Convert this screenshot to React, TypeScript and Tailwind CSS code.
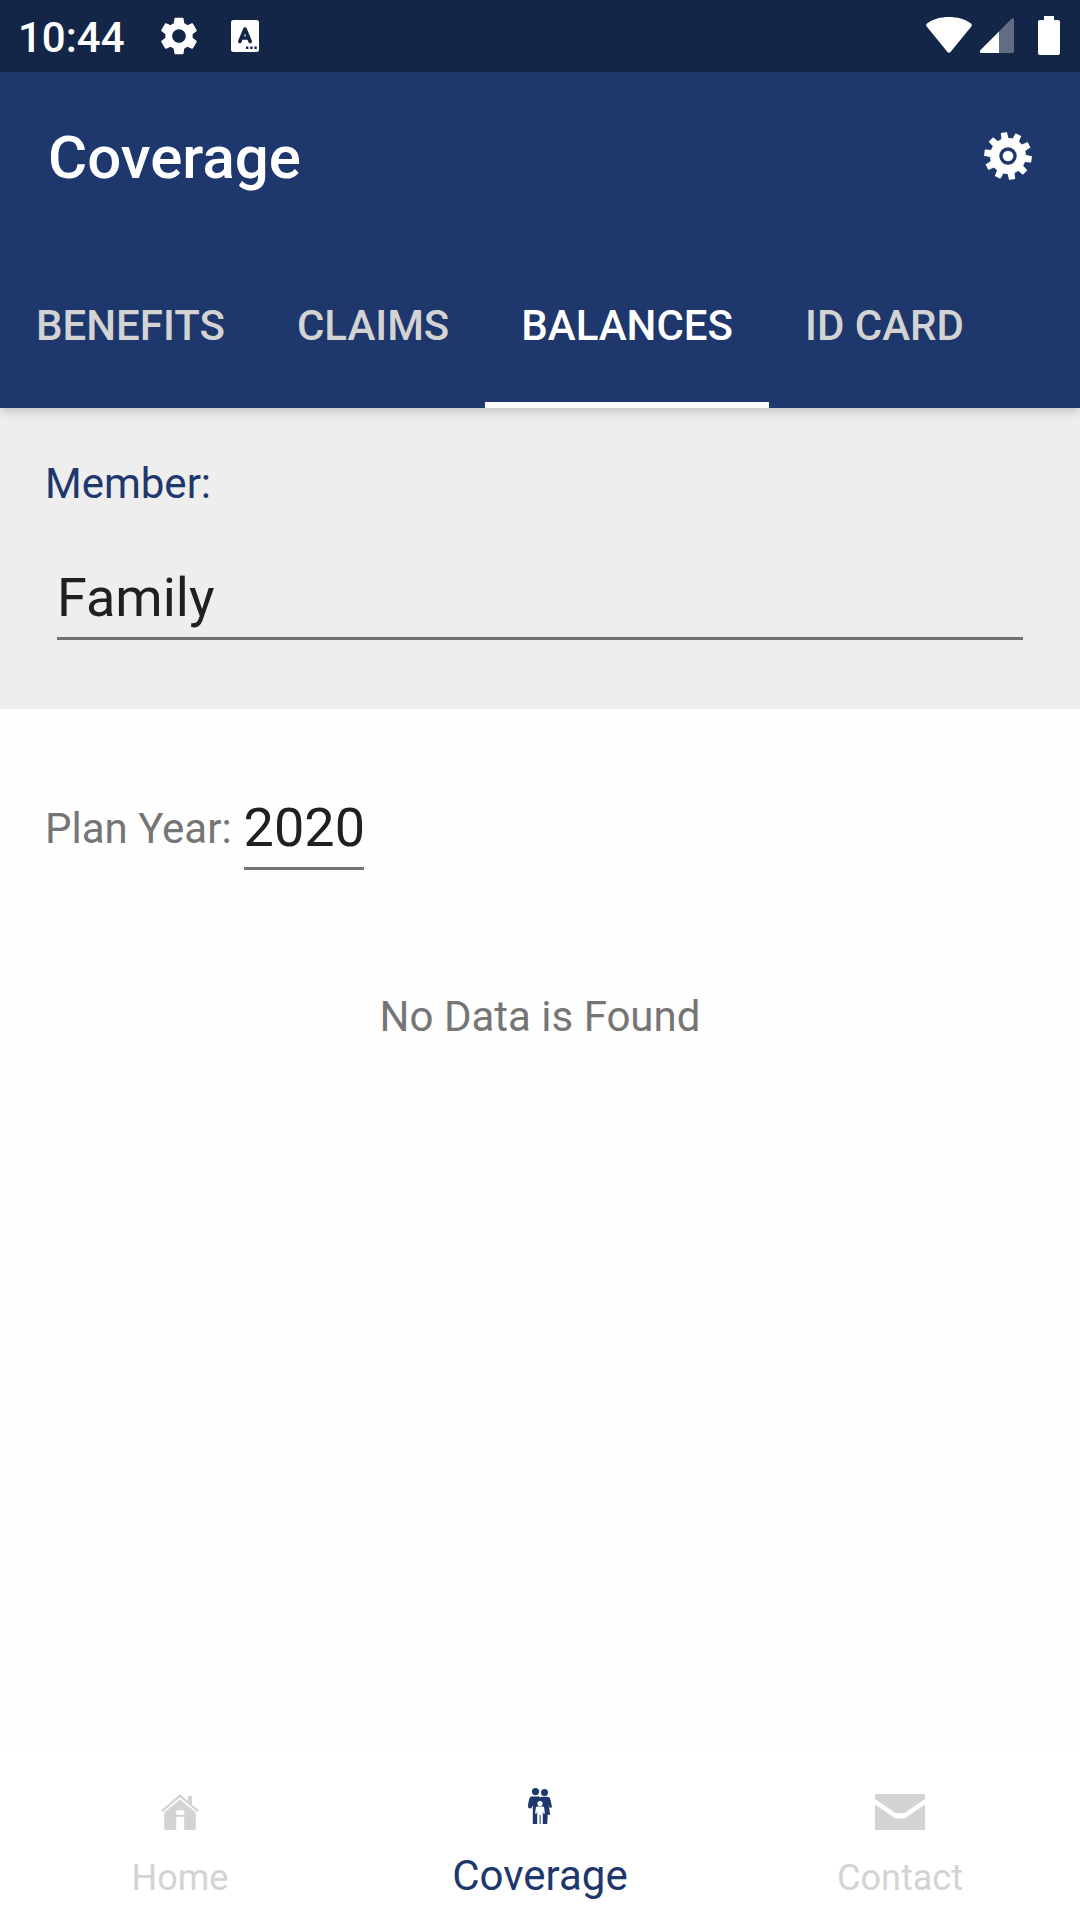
import { useState } from 'react'
import type { ReactNode } from 'react'

const tabs = ['Benefits', 'Claims', 'Balances', 'ID Card']

function StatusBar() {
  return (
    <div className="relative z-10 flex h-[72px] items-center bg-[#142648] pl-[18px] pr-5 text-white">
      <span className="pt-[3px] text-[42px] leading-[50px] font-medium">10:44</span>
      <svg className="ml-[35px] size-[38px]" viewBox="2 2 20 20" fill="currentColor" aria-hidden="true">
        <path d="M19.14 12.94c.04-.3.06-.61.06-.94 0-.32-.02-.64-.07-.94l2.03-1.58c.18-.14.23-.41.12-.61l-1.92-3.32c-.12-.22-.37-.29-.59-.22l-2.39.96c-.5-.38-1.03-.7-1.62-.94l-.36-2.54c-.04-.24-.24-.41-.48-.41h-3.84c-.24 0-.43.17-.47.41l-.36 2.54c-.59.24-1.13.57-1.62.94l-2.39-.96c-.22-.08-.47 0-.59.22L2.74 8.87c-.12.21-.08.47.12.61l2.03 1.58c-.05.3-.09.63-.09.94s.02.64.07.94l-2.03 1.58c-.18.14-.23.41-.12.61l1.92 3.32c.12.22.37.29.59.22l2.39-.96c.5.38 1.03.7 1.62.94l.36 2.54c.05.24.24.41.48.41h3.84c.24 0 .44-.17.47-.41l.36-2.54c.59-.24 1.13-.56 1.62-.94l2.39.96c.22.08.47 0 .59-.22l1.92-3.32c.12-.22.07-.47-.12-.61l-2.01-1.58zM12 15.6c-1.98 0-3.6-1.62-3.6-3.6s1.62-3.6 3.6-3.6 3.6 1.62 3.6 3.6-1.62 3.6-3.6 3.6z" />
      </svg>
      <svg className="ml-[33px] h-8 w-7" viewBox="0 0 28 32" aria-hidden="true">
        <rect width="28" height="32" rx="2.5" fill="#fff" />
        <path d="M8.800 21.500L14 9l5.200 12.500M11 18h6" fill="none" stroke="#142648" strokeWidth="3.600" strokeLinecap="round" strokeLinejoin="round" />
        <path d="M15 26.500h2.400v2.400H15zM19.200 26.500h2.400v2.400h-2.400zM23.400 26.500h2.400v2.400h-2.400z" fill="#142648" />
      </svg>
      <div className="ml-auto flex items-center pb-0.5">
        <svg className="h-9 w-[46px]" viewBox="0 0 46 36" fill="currentColor" aria-hidden="true">
          <path d="M1 6.500C7 2 15 0 23 0s16 2 22 6.500c1 .8 1 2 .3 2.900L24.500 35c-.8 1-2.200 1-3 0L.7 9.400C0 8.500 0 7.300 1 6.500z" />
        </svg>
        <svg className="ml-2 h-[35px] w-[34px]" viewBox="0 0 34 35" fill="currentColor" aria-hidden="true">
          <path d="M19 13.500L31.200 1c1.100-1.200 2.800-.8 2.800 1v31c0 1.200-.8 2-2 2H19z" opacity=".33" />
          <path d="M19 13.500V35H1.500C0 35-.5 33.200.5 32z" />
        </svg>
        <svg className="ml-6 h-[39px] w-[22px]" viewBox="0 0 22 39" fill="currentColor" aria-hidden="true">
          <path d="M6 0h10v4h4c1.300 0 2 .7 2 2v31c0 1.300-.7 2-2 2H2c-1.300 0-2-.7-2-2V6c0-1.300.7-2 2-2h4z" />
        </svg>
      </div>
    </div>
  )
}

const teeth = [0, 36, 72, 108, 144, 180, 216, 252, 288, 324]

function CogIcon() {
  return (
    <svg className="size-12" viewBox="-24 -24 48 48" aria-hidden="true">
      <circle r="18" fill="#fff" />
      {teeth.map(angle => (
        <path key={angle} d="M-3.600-17L-3.100-23.800H3.100L3.600-17z" fill="#fff" transform={`rotate(${angle - 10})`} />
      ))}
      <circle r="7" fill="none" stroke="#1e376c" strokeWidth="3.400" />
    </svg>
  )
}

function HomeIcon() {
  return (
    <svg className="h-9 w-[38px]" viewBox="0 0 38 36" fill="currentColor" aria-hidden="true">
      <path d="M0 16.500L19 0l8 7V2h4v8.500l7 6-1.300 1.700L19 3.300 1.300 18.200z" />
      <path d="M3.200 18.500L19 5.500l15.800 13V36H23.200V16.200h-8V36h-12z" />
      <path d="M15 20.800h8.500v2H15z" />
    </svg>
  )
}

function FamilyIcon() {
  return (
    <svg className="h-9 w-6" viewBox="0 0 24 36" fill="currentColor" aria-hidden="true">
      <circle cx="7.500" cy="3.600" r="3.600" />
      <circle cx="16.500" cy="4.400" r="3.500" />
      <path d="M3.500 8.500h7.500l1.200 1 1.300-.8h6c2 0 2.600 1.500 3 3l1.500 7.500-2.200.9-1.300-3.300 1.800 10H19.700l-.5 9.200H4.800V17.500l-1.600 3L.3 20 0 17l1.200-6c.4-1.600 1-2.300 2.300-2.500z" />
      <circle cx="12" cy="15.600" r="2.600" fill="#fff" />
      <path d="M9.500 18.500h5c1 0 1.500.6 1.700 1.600l.7 5.400-1.400.3-.7-3V36h-2.200v-9h-1v9H9.200V22.800l-.6 3-1.500-.3.700-5.400c.2-1 .7-1.600 1.700-1.600z" fill="#fff" />
    </svg>
  )
}

function MailIcon() {
  return (
    <svg className="h-9 w-[50px]" viewBox="0 0 50 36" fill="currentColor" aria-hidden="true">
      <path d="M0 0h50v5L29.500 19h-9L0 5z" />
      <path d="M0 10.500L20.500 24.500h9L50 10.500V36H0z" />
    </svg>
  )
}

type NavItemProps = { label: string; icon: ReactNode; active?: boolean }

function NavItem({ label, icon, active }: NavItemProps) {
  return (
    <a
      href="#"
      aria-current={active ? 'page' : undefined}
      className={`flex flex-1 flex-col items-center justify-end pb-[17px] ${
        active ? 'gap-[25px] text-[42px] leading-[54px] text-[#1e376c]' : 'gap-[23px] text-[36px] leading-[50px] text-[#d3d3d3]'
      }`}
    >
      {icon}
      <span>{label}</span>
    </a>
  )
}

export default function App() {
  const [activeTab, setActiveTab] = useState('Balances')
  const [member, setMember] = useState('Family')
  const [year, setYear] = useState('2020')

  return (
    <div className="flex min-h-screen flex-col bg-[#fefefe] font-[Roboto,sans-serif]">
      <StatusBar />

      <header className="relative bg-[#1e376c] shadow-[0_3px_10px_rgba(0,0,0,0.2)]">
        <div className="flex h-[168px] items-center justify-between px-12">
          <h1 className="pt-1 text-[60px] leading-[72px] font-medium text-white">Coverage</h1>
          <button type="button" aria-label="Settings">
            <CogIcon />
          </button>
        </div>
        <div role="tablist" className="flex h-[168px]">
          {tabs.map(tab => (
            <button
              key={tab}
              type="button"
              role="tab"
              aria-selected={tab === activeTab}
              onClick={() => setActiveTab(tab)}
              className={`border-b-6 px-9 pt-2.5 text-[42px] leading-[50px] font-medium uppercase ${
                tab === activeTab ? 'border-white text-white' : 'border-transparent text-[#d3d3d3]'
              }`}
            >
              {tab}
            </button>
          ))}
        </div>
      </header>

      <section className="bg-[#eee] px-[45px] pt-[51px] pb-[69px]">
        <label htmlFor="member" className="block text-[42px] leading-[50px] text-[#1e376c]">
          Member:
        </label>
        <div className="mt-[55px] px-3">
          <input
            id="member"
            value={member}
            onChange={e => setMember(e.target.value)}
            className="block h-[76px] w-full border-b-3 border-[#707070] pb-1.5 text-[54px] leading-[64px] text-[#202020] outline-none"
          />
        </div>
      </section>

      <main className="flex-1 px-[45px] pt-[85px]">
        <div className="flex items-start gap-3">
          <label htmlFor="year" className="pt-2.5 text-[42px] leading-[50px] text-[#757575]">
            Plan Year:
          </label>
          <input
            id="year"
            value={year}
            onChange={e => setYear(e.target.value)}
            className="h-[76px] w-[120px] border-b-3 border-[#757575] pb-1.5 text-[54px] leading-[64px] text-[#202020] outline-none"
          />
        </div>
        <p className="mt-[122px] text-center text-[42px] leading-[50px] text-[#757575]">No Data is Found</p>
      </main>

      <nav className="flex h-[168px] bg-white">
        <NavItem label="Home" icon={<HomeIcon />} />
        <NavItem label="Coverage" icon={<FamilyIcon />} active />
        <NavItem label="Contact" icon={<MailIcon />} />
      </nav>
    </div>
  )
}
